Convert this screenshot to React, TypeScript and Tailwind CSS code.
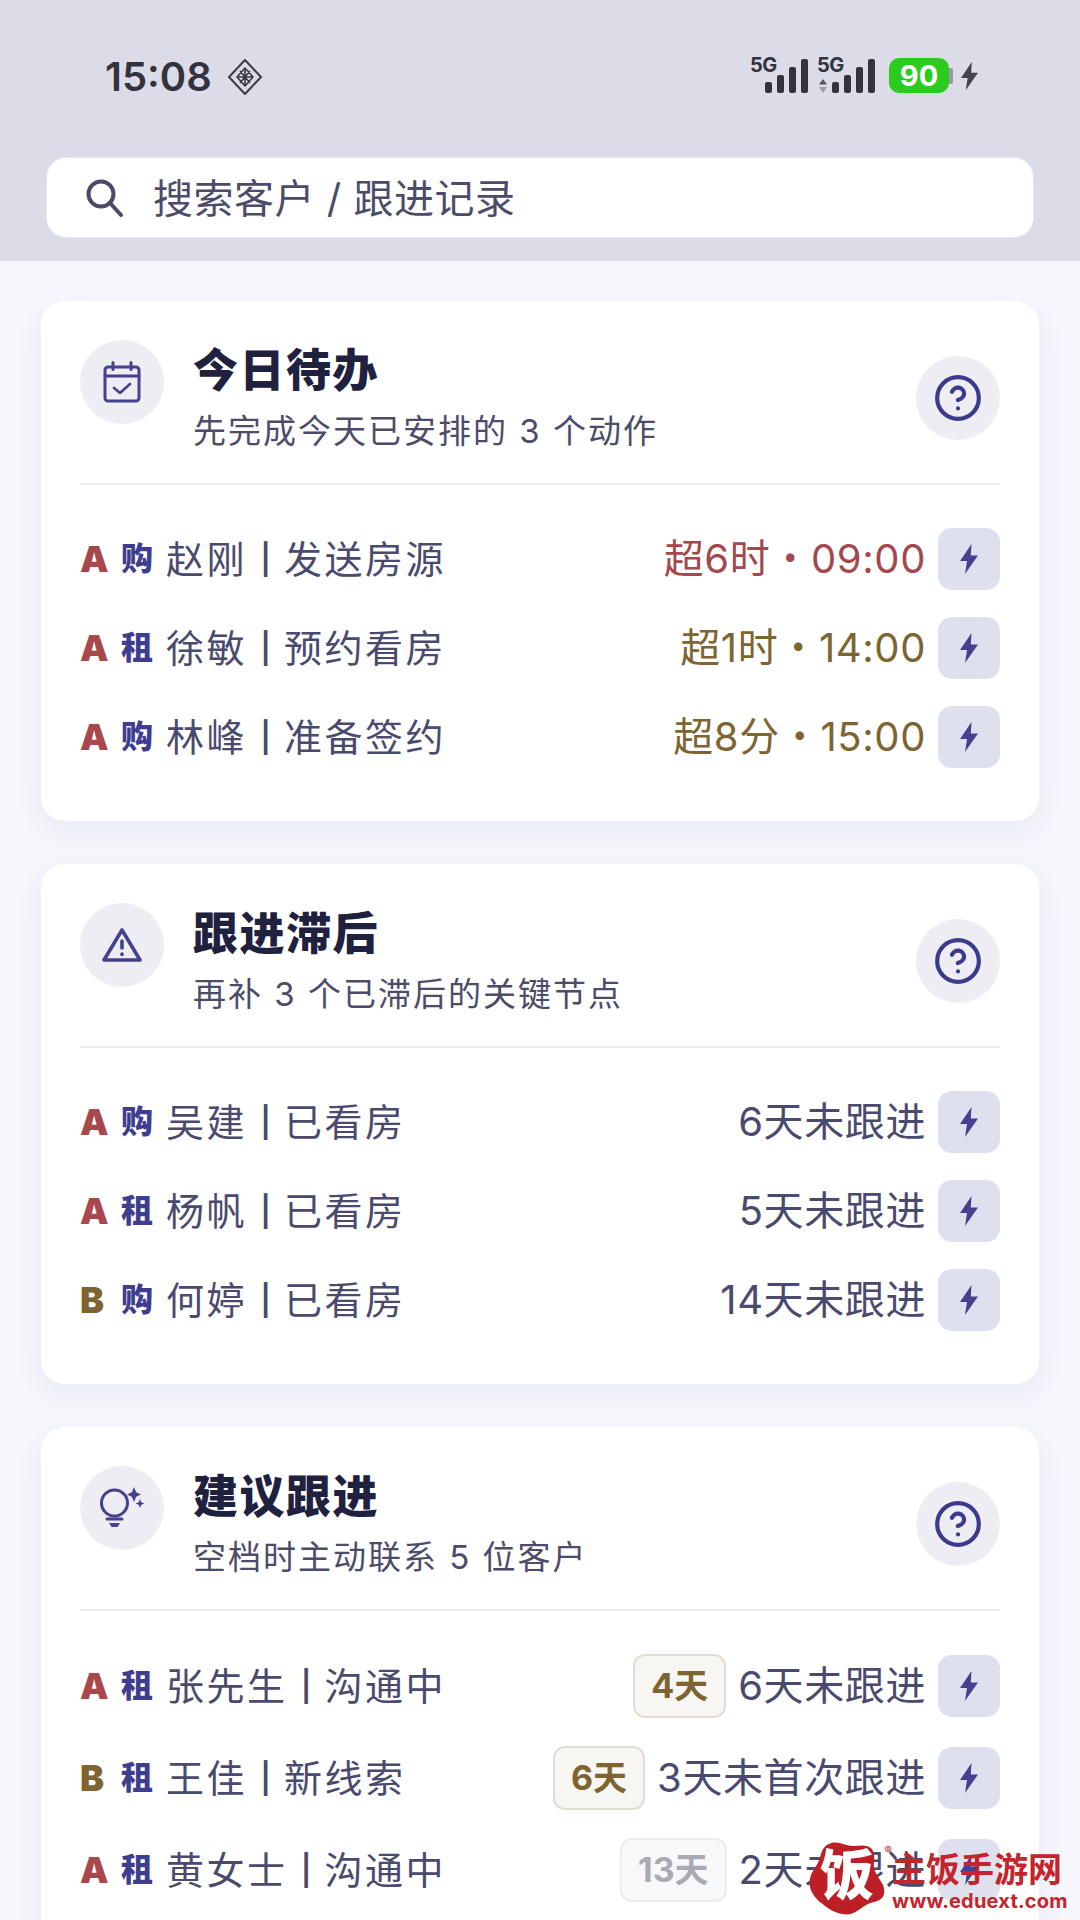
import { CircleHelp } from 'lucide-react'
import type { ReactNode } from 'react'

// ─── Icons ────────────────────────────────────────────────────────────────────

function Bolt({ className }: { className?: string }) {
  return (
    <svg viewBox="0 0 18 30" className={className} fill="currentColor">
      <path d="M11.500 0 0 17h7L5 30 18 11.500h-7.200L11.500 0Z" />
    </svg>
  )
}

function SearchIcon() {
  return (
    <svg viewBox="0 0 38 38" className="h-[38px] w-[38px] text-[#4a4a68]" fill="none" stroke="currentColor" strokeWidth="4" strokeLinecap="round">
      <circle cx="15" cy="15" r="12.500" />
      <path d="m24 24 11 12" />
    </svg>
  )
}

function CalendarIcon() {
  return (
    <svg viewBox="0 0 38 42" className="h-[42px] w-[38px] text-[#45418f]" fill="none" stroke="currentColor" strokeWidth="3" strokeLinejoin="round" strokeLinecap="round">
      <rect x="2" y="6" width="34" height="34" rx="3" />
      <path d="M2 15h34M10 1.500v7M28 1.500v7" />
      <path d="m11 27 6 5 10-9" strokeWidth="2.600" />
    </svg>
  )
}

function WarningIcon() {
  return (
    <svg viewBox="0 0 40 36" className="h-[36px] w-[40px] text-[#45418f]" fill="none" stroke="currentColor" strokeWidth="3.600" strokeLinejoin="round" strokeLinecap="round">
      <path d="M20 3 38 33H2L20 3Z" />
      <path d="M20 14v7M20 27v.5" />
    </svg>
  )
}

function BulbIcon() {
  return (
    <svg viewBox="0 0 46 44" className="h-[44px] w-[46px] text-[#45418f]" fill="none" stroke="currentColor" strokeWidth="3" strokeLinecap="round">
      <circle cx="15.500" cy="17" r="13" />
      <path d="M8 33h15" />
      <path d="M10 37h11l-2.500 4h-6L10 37Z" fill="currentColor" stroke="none" />
      <path d="m35 1 2.200 5.300L42 8.500l-4.800 2.200L35 16l-2.200-5.300L28 8.500l4.800-2.200L35 1Z" fill="currentColor" stroke="none" />
      <path d="m41 13 1.300 3.200 3.200 1.300-3.200 1.300L41 22l-1.300-3.200-3.200-1.300 3.200-1.300L41 13Z" fill="currentColor" stroke="none" />
    </svg>
  )
}

function NetIcon({ dual }: { dual?: boolean }) {
  const bars = ['h-[11px]', 'h-[18px]', 'h-[26px]', 'h-[34px]']
  return (
    <div className="relative flex h-[35px] w-[58px] items-end justify-end gap-[5px]">
      <span className="absolute left-0 top-[-3px] text-[20px] font-bold leading-none tracking-[-0.500px] text-[#33333f]">5G</span>
      {dual && (
        <svg viewBox="0 0 8 14" className="absolute bottom-0 left-[2px] h-[14px] w-[8px]">
          <path d="M4 0 8 5.500H0Z" fill="#55555f" />
          <path d="M4 14 8 8H0Z" fill="#9c9ca8" />
        </svg>
      )}
      {bars.map(h => (
        <span key={h} className={`w-[7px] rounded-[2px] bg-[#33333f] ${h}`} />
      ))}
    </div>
  )
}

function DiamondIcon() {
  return (
    <svg viewBox="0 0 34 36" className="h-[36px] w-[34px] text-[#3c3c48]" fill="none" stroke="currentColor" strokeWidth="2" strokeLinejoin="round">
      <path d="M17 1 33 18 17 35 1 18 17 1Z" />
      <path d="M17 9 25 18 17 27 9 18 17 9ZM9 18h16M17 9v18M12 12l10 12M22 12 12 24" strokeWidth="1.600" />
    </svg>
  )
}

// ─── Status bar + search ──────────────────────────────────────────────────────

function Header() {
  return (
    <div className="h-[261px] shrink-0 bg-[#dcdce8] px-[46px]">
      <div className="flex h-[157px] items-start justify-between pl-[59px] pr-[56px] pt-[56px]">
        <div className="flex items-center gap-[16px]">
          <span className="text-[40px] font-semibold leading-[42px] text-[#33333f]">15:08</span>
          <DiamondIcon />
        </div>
        <div className="flex items-center pt-[2px]">
          <NetIcon />
          <div className="ml-[9px]"><NetIcon dual /></div>
          <div className="ml-[14px] flex items-center">
            <span className="flex h-[35px] w-[60px] items-center justify-center rounded-[10px] bg-[#2ccb1f] text-[29px] font-bold leading-none text-white">90</span>
            <span className="h-[16px] w-[4px] rounded-r-[2px] bg-[#9a9aa6]" />
          </div>
          <Bolt className="ml-[8px] h-[30px] w-[17px] text-[#44444f]" />
        </div>
      </div>
      <div className="flex h-[81px] items-center gap-[29px] rounded-[20px] border border-[#e6e6ee] bg-white pl-[39px]">
        <SearchIcon />
        <span className="pt-[2px] text-[40px] leading-none tracking-[0.5px] text-[#4c4c6a]">搜索客户 / 跟进记录</span>
      </div>
    </div>
  )
}

// ─── Cards ────────────────────────────────────────────────────────────────────

type Row = {
  grade: 'A' | 'B'
  kind: string
  name: string
  stage: string
  status: string
  tone?: 'red' | 'brown'
  badge?: { label: string; muted?: boolean }
}

function ListRow({ row }: { row: Row }) {
  const gradeColor = row.grade === 'A' ? 'text-[#a8474c]' : 'text-[#7d6430]'
  const statusColor = row.tone === 'red' ? 'text-[#a4484e]' : row.tone === 'brown' ? 'text-[#7d6430]' : 'text-[#4a4a6e]'
  return (
    <div className="flex items-center">
      <span className={`w-[41px] text-[36px] font-black leading-none ${gradeColor}`}>{row.grade}</span>
      <span className="w-[45px] text-[32px] font-black leading-none text-[#3f3d8f]">{row.kind}</span>
      <div className="flex items-center text-[38px] leading-none tracking-[2.500px] text-[#4a4a6e]">
        <span>{row.name}</span>
        <span className="w-[37px] text-center text-[30px] font-semibold tracking-normal">|</span>
        <span>{row.stage}</span>
      </div>
      <div className="ml-auto flex items-center">
        {row.badge && (
          <span
            className={
              row.badge.muted
                ? 'mr-[12px] flex h-[64px] items-center rounded-[12px] border-2 border-[#ebebf1] bg-[#f8f8fb] px-[16px] text-[34px] font-bold leading-none text-[#aaaab6]'
                : 'mr-[12px] flex h-[64px] items-center rounded-[12px] border-2 border-[#e2ddd2] bg-[#f8f6f2] px-[16px] text-[34px] font-bold leading-none text-[#7d6430]'
            }
          >
            {row.badge.label}
          </span>
        )}
        <span className={`text-[40px] leading-none tracking-[0.6px] ${statusColor}`}>{row.status}</span>
        <span className="ml-[12px] flex h-[62px] w-[62px] items-center justify-center rounded-[14px] bg-[#dfe0ee]">
          <Bolt className="h-[30px] w-[18px] text-[#45418f]" />
        </span>
      </div>
    </div>
  )
}

function Card({ icon, title, sub, rows, gap }: { icon: ReactNode; title: string; sub: string; rows: Row[]; gap: string }) {
  return (
    <section className="rounded-[24px] bg-white px-[39px] pb-[53px] pt-[39px] shadow-[0_10px_28px_rgba(70,70,130,0.07)]">
      <div className="flex border-b-2 border-[#ececf3] pb-[27px]">
        <div className="flex h-[84px] w-[84px] shrink-0 items-center justify-center rounded-full bg-[#ededf3]">{icon}</div>
        <div className="ml-[29px] flex-1">
          <h2 className="text-[45px] font-black leading-[62px] tracking-[1.5px] text-[#20203f]">{title}</h2>
          <p className="mt-[4px] text-[33px] leading-[50px] tracking-[2px] text-[#4c4c6a]">{sub}</p>
        </div>
        <div className="flex h-[84px] w-[84px] shrink-0 items-center justify-center self-center rounded-full bg-[#ededf3]">
          <CircleHelp className="h-[50px] w-[50px] text-[#3c3a8c]" strokeWidth={2} />
        </div>
      </div>
      <div className={`mt-[43px] flex flex-col ${gap}`}>
        {rows.map(r => (
          <ListRow key={r.name} row={r} />
        ))}
      </div>
    </section>
  )
}

const todo: Row[] = [
  { grade: 'A', kind: '购', name: '赵刚', stage: '发送房源', status: '超6时・09:00', tone: 'red' },
  { grade: 'A', kind: '租', name: '徐敏', stage: '预约看房', status: '超1时・14:00', tone: 'brown' },
  { grade: 'A', kind: '购', name: '林峰', stage: '准备签约', status: '超8分・15:00', tone: 'brown' },
]

const late: Row[] = [
  { grade: 'A', kind: '购', name: '吴建', stage: '已看房', status: '6天未跟进' },
  { grade: 'A', kind: '租', name: '杨帆', stage: '已看房', status: '5天未跟进' },
  { grade: 'B', kind: '购', name: '何婷', stage: '已看房', status: '14天未跟进' },
]

const suggest: Row[] = [
  { grade: 'A', kind: '租', name: '张先生', stage: '沟通中', status: '6天未跟进', badge: { label: '4天' } },
  { grade: 'B', kind: '租', name: '王佳', stage: '新线索', status: '3天未首次跟进', badge: { label: '6天' } },
  { grade: 'A', kind: '租', name: '黄女士', stage: '沟通中', status: '2天未跟进', badge: { label: '13天', muted: true } },
]

// ─── Watermark ────────────────────────────────────────────────────────────────

function Watermark() {
  return (
    <div className="absolute left-[809px] top-[1842px] flex items-start">
      <div className="relative h-[73px] w-[77px]">
        <svg viewBox="0 0 76 74" preserveAspectRatio="none" className="h-full w-full">
          <path d="M22 1c8-2 13 3 22 3 6 0 14-2 18 3 5 6 0 14 3 22 3 9 11 14 9 24-2 8-11 7-18 11-8 5-13 11-23 9C22 71 18 66 11 61 4 55-1 47 1 37 3 28 9 24 11 15 13 8 15 3 22 1Z" fill="#bd1f26" />
        </svg>
        <span className="absolute left-[11px] top-[7px] text-[54px] font-black leading-none text-white">饭</span>
        <span className="absolute right-[-6px] top-[3px] text-[11px] leading-none text-[#c4242b]">®</span>
      </div>
      <div className="ml-[6px] mt-[9px] flex flex-col">
        <span className="text-[34px] font-bold leading-[38px] text-[#c4242b]">主饭手游网</span>
        <span className="mt-[2px] text-[20px] font-bold leading-[20px] tracking-[0.2px] text-[#c4242b]">www.eduext.com</span>
      </div>
    </div>
  )
}

export default function App() {
  return (
    <div className="relative flex h-[1920px] w-[1080px] flex-col overflow-hidden bg-[#f6f6fd] font-['Inter','Noto_Sans_CJK_SC',sans-serif]">
      <Header />
      <main className="flex flex-col gap-[43px] px-[41px] pt-[40px]">
        <Card icon={<CalendarIcon />} title="今日待办" sub="先完成今天已安排的 3 个动作" rows={todo} gap="gap-[27px]" />
        <Card icon={<WarningIcon />} title="跟进滞后" sub="再补 3 个已滞后的关键节点" rows={late} gap="gap-[27px]" />
        <Card icon={<BulbIcon />} title="建议跟进" sub="空档时主动联系 5 位客户" rows={suggest} gap="gap-[28px]" />
      </main>
      <Watermark />
    </div>
  )
}
